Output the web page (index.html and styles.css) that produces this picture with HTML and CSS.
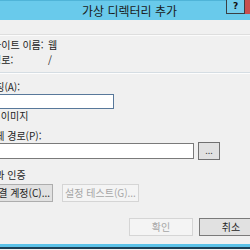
FILE: index.html
```html
<!DOCTYPE html>
<html lang="ko">
<head>
<meta charset="utf-8">
<link rel="stylesheet" href="styles.css">
</head>
<body>
<div class="win">
  <div class="titlebar">
    <span class="title">가상 디렉터리 추가</span>
    <span class="help">?</span>
    <span class="close"></span>
  </div>
  <div class="band"></div>
  <div class="content">
    <div class="info">
      <div class="row"><span class="k">사이트 이름:</span><span class="v">웹</span></div>
      <div class="row"><span class="k">경로:</span><span class="v">/</span></div>
    </div>
    <div class="sep"></div>
    <div class="lbl first">별칭(A):</div>
    <div class="input alias"></div>
    <div class="hint">예: 이미지</div>
    <div class="lbl second">실제 경로(P):</div>
    <div class="pathrow">
      <div class="input path"></div>
      <button class="btn dots">...</button>
    </div>
    <div class="lbl third">통과 인증</div>
    <div class="btnrow">
      <button class="btn connect">연결 계정(C)...</button>
      <button class="btn test disabled">설정 테스트(G)...</button>
    </div>
    <div class="footer">
      <button class="btn ok disabled">확인</button>
      <button class="btn cancel">취소</button>
    </div>
  </div>
  <div class="bottom"></div>
</div>
</body>
</html>
```
FILE: styles.css
```css
html, body {
  margin: 0;
  padding: 0;
  width: 250px;
  height: 250px;
  overflow: hidden;
  background: #f0f0f0;
}
body {
  font-family: "Noto Sans CJK KR", "Noto Sans", sans-serif;
  font-size: 10px;
  color: #1e1e1e;
}
.win {
  width: 300px;
  margin-left: -28px;
  background: #f0f0f0;
}
.titlebar {
  height: 20px;
  box-sizing: border-box;
  border-top: 1px solid #4fb4d8;
  background: #69caeb;
  display: flex;
  align-items: flex-start;
}
.title {
  margin-left: 110px;
  margin-top: 1px;
  font-size: 12px;
  line-height: 17px;
  color: #1a1a1a;
}
.help {
  margin-left: auto;
  margin-top: -1px;
  width: 19px;
  height: 14px;
  box-sizing: border-box;
  border: 1px solid #3a3f44;
  border-top: none;
  background: #74cdec;
  font-family: "DejaVu Sans", sans-serif;
  font-weight: bold;
  font-size: 9px;
  line-height: 12px;
  text-align: center;
  color: #111;
}
.close {
  margin-top: -1px;
  width: 27px;
  height: 14px;
  background: #c7504f;
}
.band {
  height: 14px;
  border-bottom: 1px solid #dedede;
  box-shadow: 0 1px 0 #fbfbfb;
  margin-bottom: 1px;
}
.content {
  padding: 0 9px 0 14px;
}
.info {
  padding-left: 6px;
  margin-top: 2px;
}
.row {
  display: flex;
  height: 15px;
  line-height: 15px;
}
.k {
  width: 56px;
}
.sep {
  margin: 5px -14px 0 -14px;
  height: 1px;
  background: #d5dde3;
  border-bottom: 1px solid #fdfdfd;
}
.lbl {
  height: 14px;
  line-height: 14px;
}
.lbl.first { margin-top: 6px; }
.lbl.second { margin-top: 6px; }
.lbl.third { margin-top: 8px; }
.input {
  box-sizing: border-box;
  background: #fff;
}
.alias {
  width: 128px;
  height: 15px;
  border: 1px solid #58789a;
}
.hint {
  height: 14px;
  line-height: 14px;
}
.pathrow {
  display: flex;
  align-items: flex-start;
  gap: 4px;
  margin-top: -1px;
}
.path {
  width: 208px;
  height: 16px;
  margin-top: 1px;
  border: 1px solid #7a7a7a;
}
.btn {
  box-sizing: border-box;
  height: 18px;
  padding: 0;
  border: 1px solid #adadad;
  background: #e1e1e1;
  font-family: "Noto Sans CJK KR", "Noto Sans", sans-serif;
  font-size: 10px;
  line-height: 14px;
  color: #1e1e1e;
  display: flex;
  align-items: center;
  justify-content: center;
}
.dots {
  width: 22px;
  border-color: #707070;
  font-size: 9px;
  color: #444;
}
.btnrow {
  display: flex;
  gap: 9px;
  margin-top: 2px;
}
.connect { width: 67px; }
.test { width: 77px; }
.btn.disabled {
  background: #f4f4f4;
  border-color: #d5d5d5;
  color: #a6a6a6;
}
.footer {
  display: flex;
  justify-content: flex-end;
  gap: 6px;
  margin-top: 16px;
}
.ok, .cancel { width: 64px; }
.cancel {
  border-color: #7a7a7a;
}
.bottom {
  margin-top: 8px;
  height: 3px;
  background: #5cc2e8;
  border-bottom: 2px solid #1d3f55;
}
```
